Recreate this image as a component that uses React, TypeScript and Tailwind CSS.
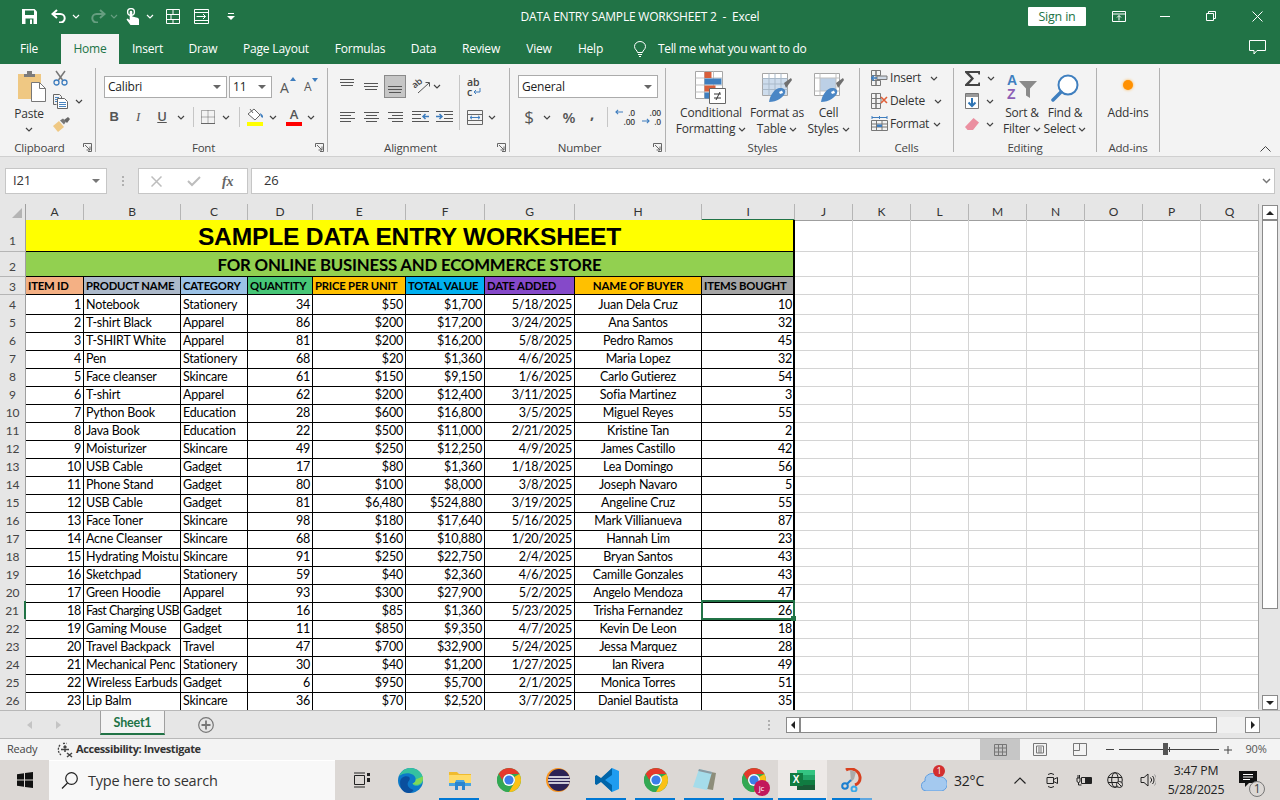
import React from "react";

const G = "#217346";
const Chev = ({ c = "#444", className = "" }: { c?: string; className?: string }) => (
  <svg width="8" height="5" viewBox="0 0 8 5" className={className}><path d="M1 1l3 3 3-3" fill="none" stroke={c} strokeWidth="1.2" /></svg>
);
const Caret = ({ c = "#666" }: { c?: string }) => (
  <svg width="8" height="4" viewBox="0 0 8 4"><path d="M0 0h8L4 4z" fill={c} /></svg>
);
const Lines = ({ rows, c = "#555", w = 17, h = 12 }: { rows: number[][]; c?: string; w?: number; h?: number }) => (
  <svg width={w} height={h} viewBox={`0 0 ${w} ${h}`}>
    {rows.map((r, i) => <path key={i} d={`M${r[0]} ${r[2]}.5H${r[1]}`} stroke={c} strokeWidth="1" />)}
  </svg>
);

const Save = () => (
  <svg width="15" height="15" viewBox="0 0 15 15"><path d="M0 0h12.5L15 2.5V15H0z" fill="#fff" /><path d="M3 1.5h9V6H3z" fill={G} /><path d="M3.5 9.5h8V15h-8z" fill={G} /><path d="M8 10.5h2V15H8z" fill="#fff" /></svg>
);
const Undo = ({ c = "#fff" }: { c?: string }) => (
  <svg width="16" height="14" viewBox="0 0 16 14"><path d="M6 1L1.5 5 6 9M2 5h7.5a4.2 4.2 0 0 1 0 8.4H8" fill="none" stroke={c} strokeWidth="2" /></svg>
);
const Touch = () => (
  <svg width="14" height="17" viewBox="0 0 14 17"><circle cx="5" cy="4" r="3.4" fill="none" stroke="#fff" strokeWidth="1.4" /><path d="M3.7 4a1.3 1.3 0 0 1 2.6 0v4.5l5 1.2c1 .3 1.7 1 1.7 2V17H4.5L.5 11.5l1-1 2.2 1.5z" fill="#fff" /></svg>
);
const FormIcon = () => (
  <svg width="14" height="15" viewBox="0 0 14 15" fill="none" stroke="#fff"><path d="M.5.5h13v14H.5zM.5 5.5h13M.5 10.5h13M7 .5v5M7 10.5v4M5 5.5v5" /></svg>
);
const SubFormIcon = () => (
  <svg width="15" height="15" viewBox="0 0 15 15" fill="none" stroke="#fff"><path d="M.5.5h14v14H.5zM.5 3.5h14M.5 11.5h14M2.5 7.5h9M9 5l2.5 2.5L9 10" /></svg>
);
const PasteIcon = () => (
  <svg width="29" height="31" viewBox="0 0 29 31"><path d="M1 3h23v25H1z" fill="#efc883" rx="2" /><path d="M7 3h11v3H7zM10 0h5v3h-5z" fill="#7c7c7c" /><path d="M14.500 11.500h8l6 6v13h-14z" fill="#fff" stroke="#777" /><path d="M22.500 11.500v6h6" fill="none" stroke="#777" /></svg>
);
const Scissors = () => (
  <svg width="15" height="16" viewBox="0 0 15 16" fill="none"><path d="M3 1l6.500 9M12 1L5.500 10" stroke="#777" strokeWidth="1.500" /><circle cx="3.500" cy="12.500" r="2.500" stroke="#3e7dbe" strokeWidth="1.300" /><circle cx="11.500" cy="12.500" r="2.500" stroke="#3e7dbe" strokeWidth="1.300" /></svg>
);
const CopyIcon = () => (
  <svg width="16" height="15" viewBox="0 0 16 15" fill="none"><path d="M.5.5h6l2 2v2M.5.5v10h3" stroke="#666" /><path d="M4.500 4.500h7l3 3v7h-10z" fill="#fff" stroke="#666" /><path d="M6 8.500h7M6 10.500h7M6 12.500h7" stroke="#4a85c0" /><path d="M2 3.500h4M2 5.500h2M2 7.500h2" stroke="#4a85c0" /></svg>
);
const Painter = () => (
  <svg width="17" height="15" viewBox="0 0 17 15"><path d="M0 9l6-5 5 6-6 5z" fill="#efc883" /><path d="M7 3.500l3-2 3 3-2 3z" fill="#777" /><path d="M11 3l4-3 2 2-3 4z" fill="#666" /></svg>
);
const BordersIcon = () => (
  <svg width="14" height="14" viewBox="0 0 14 14" fill="none" stroke="#666" strokeDasharray="1 1"><path d="M.5.5h13v13H.5zM7 .5v13M.5 7h13" /><path d="M0 13.500h14" strokeDasharray="none" /></svg>
);
const FillIcon = () => (
  <svg width="17" height="18" viewBox="0 0 17 18"><path d="M1 6l6-5 6 6-5 5z" fill="#fff" stroke="#666" /><path d="M3 1l3 4" stroke="#666" /><path d="M13 5c2 1 3.500 3 3 4.500-1 .5-2-.5-2.500-2z" fill="#3e7dbe" /><path d="M0 14h16v4H0z" fill="#ffff00" /></svg>
);
const OrientIcon = () => (
  <svg width="19" height="17" viewBox="0 0 19 17" fill="none" className="overflow-visible"><text x="1" y="9" fontSize="9" fontWeight="600" fontFamily="Open Sans" fill="#444" transform="rotate(-40 5 6)">ab</text><path d="M7 15L18 5M14.500 4.500H18.500V8.500" stroke="#555" /></svg>
);
const MergeIcon = () => (
  <svg width="16" height="15" viewBox="0 0 16 15" fill="none"><path d="M.5.5h15v14H.5zM.5 4.500h15M.5 10.500h15" stroke="#666" /><path d="M3 7.500h10M5 5.800L3 7.500l2 1.700M11 5.800l2 1.700-2 1.700" stroke="#3e7dbe" /></svg>
);
const WrapIcon = () => (
  <div className="relative w-[17px] h-[20px] text-[10.5px] leading-[10px] text-[#444] font-semibold">
    <div>ab</div>
    <div className="flex items-center h-[10px]">c<svg width="8" height="7" viewBox="0 0 8 7" fill="none" className="ml-[1px]"><path d="M7 0v4H1M3 2L1 4l2 2" stroke="#3e7dbe" /></svg></div>
  </div>
);
const IndentIcon = ({ flip }: { flip?: boolean }) => (
  <svg width="17" height="12" viewBox="0 0 17 12" className={flip ? "-scale-x-100" : ""} fill="none"><path d="M0 .500h17M8 3.500h9M8 7.500h9M0 10.500h17" stroke="#555" /><path d="M0 5.500h5M3.500 3l2.500 2.500L3.500 8" stroke="#3e7dbe" strokeWidth="1.500" /></svg>
);
const DecIcon = ({ inc }: { inc?: boolean }) => (
  <div className="relative w-[20px] h-[18px] flex flex-col text-[8.5px] leading-[9px] font-semibold text-[#444] items-end">
    <div>{inc ? ".0" : ".00"}</div>
    <div>{inc ? ".00" : ".0"}</div>
    <svg width="8" height="6" viewBox="0 0 9 6" fill="none" className={inc ? "absolute left-0 top-[1px]" : "absolute left-[1px] top-[10px] -scale-x-100"}><path d="M1 3h8M3.500 .5L1 3l2.500 2.500" stroke="#3e7dbe" strokeWidth="1.200" /></svg>
  </div>
);
const CondIcon = () => (
  <svg width="32" height="34" viewBox="0 0 32 34" fill="none">
    <path d="M.5 .5h27v27H.5z" fill="#fff" stroke="#a6a6a6" />
    <path d="M.5 7h27M.5 14h27M.5 21h27M9.500 .5v27M18.500 .5v27" stroke="#bfbfbf" />
    <path d="M9.500 1h7v6h-7z" fill="#d95f3b" /><path d="M9.500 7.500h17v6h-17z" fill="#3f7fbf" /><path d="M9.500 14.500h11v6h-11z" fill="#d95f3b" /><path d="M9.500 21.500h5v6h-5z" fill="#3f7fbf" />
    <path d="M14.500 17.500h16v15h-16z" fill="#fff" stroke="#666" />
    <path d="M19 23h7M19 27h7M25 21l-4 8" stroke="#333" />
  </svg>
);
const TableBrush = ({ one }: { one?: boolean }) => (
  <svg width="30" height="30" viewBox="0 0 30 30" fill="none">
    <path d="M.5 .5h25v22H.5z" fill="#fff" stroke="#a6a6a6" />
    {one ? <path d="M6 5h16v13H6z" fill="#bcd0e6" /> : <path d="M1 5h24v17H1z" fill="#cddcec" />}
    {!one && <path d="M.5 5.500h25M.5 11h25M.5 16.500h25M7 .5v22M13 .5v22M19 .5v22" stroke="#a9b9c9" />}
    {one && <path d="M.5 5h25M.5 18h25M6 .5v22M22 .5v22" stroke="#bfbfbf" />}
    <path d="M22 10l7-5 1 2-6 8z" fill="#6f6f6f" />
    <path d="M7 29c1-7 6-14 11-14 4 0 6 2 5 5-1 4-8 9-16 9z" fill="#4a86c5" />
    <path d="M17 19l3-1.500 1 2.500-3 1z" fill="#fff" />
  </svg>
);
const CellIco = ({ kind }: { kind: string }) => (
  <svg width="17" height="17" viewBox="0 0 17 17" fill="none">
    <path d="M.5 .5h4.500v5H.5zM5 .5h4.500v5H5zM.5 10.500h4.500v5H.5zM5 10.500h4.500v5H5zM.5 5.500h4.500v5H.5z" stroke="#777" />
    {kind === "i" && <><path d="M6 6h10v3.500H6z" fill="#cfd8e3" stroke="#777" /><path d="M6 8H1M3 5.500L.5 8 3 10.500" stroke="#3e7dbe" strokeWidth="1.500" /></>}
    {kind === "d" && <><path d="M5 5.500h5v5H5z" stroke="#777" /><path d="M10 4l6 6M16 4l-6 6" stroke="#e0603a" strokeWidth="1.600" /></>}
  </svg>
);
const FormatIco = () => (
  <svg width="17" height="17" viewBox="0 0 17 17" fill="none">
    <path d="M1 1.500h15M1 0v3M16 0v3M8.500 0v3" stroke="#3e7dbe" />
    <path d="M.5 4.500h16v10H.5zM.5 8h16M.5 11h16M5.500 4.500v10M11 4.500v10" stroke="#777" />
    <path d="M6 8.500h5v2.500H6z" fill="#3e7dbe" />
  </svg>
);
const Sigma = () => (
  <svg width="15" height="15" viewBox="0 0 15 15"><path d="M0 0h15v3.500h-1.500L13 2H4l5 5.500L4 13h9l.5-1.500H15V15H0v-1.500L6 7.500 0 1.500z" fill="#444" /></svg>
);
const FillDown = () => (
  <svg width="14" height="16" viewBox="0 0 14 16" fill="none"><path d="M.5 .5h13v15H.5z" fill="#fff" stroke="#777" /><path d="M1 1h12v3H1z" fill="#999" /><path d="M7 5v8M3.500 9.500L7 13l3.500-3.500" stroke="#2f75b5" strokeWidth="2" /></svg>
);
const Eraser = () => (
  <svg width="14" height="13" viewBox="0 0 14 13"><path d="M8.500 0L14 4.500 8 12 2.500 12 0 9z" fill="#eb8fa0" /></svg>
);
const SortIco = () => (
  <div className="relative w-[30px] h-[28px] font-['Liberation_Sans',sans-serif] font-bold text-[14px] leading-[13px]">
    <div className="text-[#3f7fbf]">A</div>
    <div className="text-[#8d5fb5] mt-[1px]">Z</div>
    <svg width="18" height="17" viewBox="0 0 18 17" className="absolute left-[12px] top-[7px]"><path d="M0 0h18l-7 7.500V17l-4-2.500v-7z" fill="#8a8a8a" /></svg>
  </div>
);
const FindIco = () => (
  <svg width="28" height="28" viewBox="0 0 28 28" fill="none"><circle cx="17" cy="11" r="9.500" fill="#fff" stroke="#3f7fbf" strokeWidth="2" /><path d="M10 18L2 26" stroke="#3f7fbf" strokeWidth="3.500" strokeLinecap="round" /></svg>
);

const Group = ({ w, label, launcher, children }: { w: string; label: string; launcher?: boolean; children: React.ReactNode }) => (
  <div className={`${w} relative shrink-0 h-[84px] flex flex-col border-r border-[#b1b1b1]`}>
    <div className="h-[75px] flex">{children}</div>
    <div className={launcher ? "h-[9px] pr-[16px] text-[11.5px] leading-[9px] text-center text-[#444]" : "h-[9px] text-[11.5px] leading-[9px] text-center text-[#444]"}>{label}</div>
    {launcher && (
      <svg width="9" height="9" viewBox="0 0 9 9" className="absolute right-[3px] bottom-[0px]" fill="none"><path d="M.5 4V.5H8.500V8.500H5" stroke="#666" /><path d="M2 2l5 5M3.500 7H7V3.500" stroke="#666" /></svg>
    )}
  </div>
);

const BigBtn = ({ w, icon, l1, l2 }: { w: string; icon: React.ReactNode; l1: string; l2: string }) => (
  <div className={`${w} flex flex-col items-center pt-[3px] text-[12px] leading-[16px] text-[#333] shrink-0`}>
    <div className="h-[33px] flex items-center justify-center">{icon}</div>
    <div className="mt-[1px] whitespace-nowrap">{l1}</div>
    <div className="whitespace-nowrap flex items-center gap-[3px]">{l2}<Chev /></div>
  </div>
);

const Ribbon = () => (
  <div className="h-[93px] bg-[#f3f3f3] border-b border-[#d0d0d0] flex pt-[4px] shrink-0">
    <Group w="w-[96px]" label="Clipboard" launcher>
      <div className="w-[53px] pl-[14px] flex flex-col items-start shrink-0">
        <div className="pt-[3px] h-[35px] pl-[3px]"><PasteIcon /></div>
        <div className="text-[12px] leading-[16px] text-[#333] mt-[3px] w-[30px] text-center">Paste</div>
        <div className="w-[30px] flex justify-center mt-[5px]"><Chev /></div>
      </div>
      <div className="flex flex-col gap-[3px]">
        <div className="h-[20px] flex items-center"><Scissors /></div>
        <div className="h-[20px] flex items-center gap-[6px]"><CopyIcon /><Chev /></div>
        <div className="h-[20px] flex items-center"><Painter /></div>
      </div>
    </Group>

    <Group w="w-[232px]" label="Font" launcher>
      <div className="pl-[8px] pt-[8px] w-full">
        <div className="flex items-center h-[22px]">
          <div className="w-[123px] h-[22px] bg-white border border-[#ababab] flex items-center justify-between pl-[3px] pr-[5px] text-[12px] text-[#222]">Calibri<Caret /></div>
          <div className="w-[43px] h-[22px] ml-[2px] bg-white border border-[#ababab] flex items-center justify-between pl-[3px] pr-[5px] text-[12px] text-[#222]">11<Caret /></div>
          <div className="relative w-[24px] ml-[8px] text-[14px] text-[#555]">A<svg width="6" height="4" viewBox="0 0 6 4" className="absolute left-[10px] top-[0px]"><path d="M3 0l3 4H0z" fill="#3e7dbe" /></svg></div>
          <div className="relative w-[20px] text-[12px] text-[#555] ml-[0px]">A<svg width="6" height="4" viewBox="0 0 6 4" className="absolute left-[8px] top-[0px]"><path d="M0 0h6L3 4z" fill="#3e7dbe" /></svg></div>
        </div>
        <div className="flex items-center h-[20px] mt-[9px] text-[#555]">
          <div className="w-[20px] text-center font-bold text-[13px] font-['Liberation_Sans',sans-serif]">B</div>
          <div className="w-[24px] ml-[2px] text-center italic text-[13px] font-['Liberation_Serif',serif]">I</div>
          <div className="w-[24px] text-center font-semibold text-[13px] underline">U</div>
          <div className="ml-[3px]"><Chev /></div>
          <div className="w-px h-[20px] bg-[#c6c6c6] ml-[8px] mr-[7px]" />
          <BordersIcon />
          <div className="ml-[7px]"><Chev /></div>
          <div className="w-px h-[20px] bg-[#c6c6c6] ml-[9px] mr-[7px]" />
          <FillIcon />
          <div className="ml-[5px]"><Chev /></div>
          <div className="w-[16px] ml-[9px] text-center relative">
            <div className="text-[13px] leading-[13px] font-semibold text-[#555]">A</div>
            <div className="h-[4px] bg-[#ff0000] mt-[1px]" />
          </div>
          <div className="ml-[5px]"><Chev /></div>
        </div>
      </div>
    </Group>

    <Group w="w-[182px]" label="Alignment" launcher>
      <div className="pl-[11px] pt-[7px]">
        <div className="flex items-center h-[23px]">
          <div className="w-[17px] self-start pt-[3px]"><Lines rows={[[1, 15, 1], [1, 15, 4], [2, 14, 7]]} h={9} /></div>
          <div className="w-[17px] ml-[7px]"><Lines rows={[[1, 15, 1], [1, 15, 4], [2, 14, 7]]} h={9} /></div>
          <div className="w-[22px] h-[23px] ml-[4px] bg-[#c6c6c6] border border-[#8a8a8a] flex items-end justify-center pb-[3px]"><Lines rows={[[1, 15, 1], [1, 15, 4], [2, 14, 7]]} h={9} /></div>
          <div className="ml-[5px]"><OrientIcon /></div>
          <div className="ml-[3px]"><Chev /></div>
          <div className="w-px h-[55px] bg-[#c6c6c6] ml-[18px] mr-[7px] self-start" />
          <WrapIcon />
        </div>
        <div className="flex items-center h-[20px] mt-[9px]">
          <div className="ml-[1px]"><Lines rows={[[0, 15, 1], [0, 11, 4], [0, 15, 7], [0, 11, 10]]} /></div>
          <div className="ml-[7px]"><Lines rows={[[0, 15, 1], [2, 13, 4], [0, 15, 7], [2, 13, 10]]} /></div>
          <div className="ml-[7px]"><Lines rows={[[0, 15, 1], [4, 15, 4], [0, 15, 7], [4, 15, 10]]} /></div>
          <div className="ml-[7px]"><IndentIcon flip /></div>
          <div className="ml-[7px]"><IndentIcon /></div>
          <div className="ml-[14px]"><MergeIcon /></div>
          <div className="ml-[5px]"><Chev /></div>
        </div>
      </div>
    </Group>

    <Group w="w-[156px]" label="Number" launcher>
      <div className="pl-[8px] pt-[7px]">
        <div className="w-[140px] h-[23px] bg-white border border-[#ababab] flex items-center justify-between pl-[3px] pr-[5px] text-[12px] text-[#222]">General<Caret /></div>
        <div className="flex items-center h-[20px] mt-[9px] text-[#555]">
          <div className="w-[22px] text-center text-[17px]">$</div>
          <div className="ml-[3px]"><Chev /></div>
          <div className="w-[22px] ml-[7px] text-center text-[15px] font-semibold">%</div>
          <div className="w-[10px] ml-[7px] text-center text-[15px] font-bold -translate-y-[4px]">,</div>
          <div className="w-px h-[20px] bg-[#c6c6c6] ml-[10px] mr-[7px]" />
          <DecIcon inc />
          <div className="ml-[6px]"><DecIcon /></div>
        </div>
      </div>
    </Group>

    <Group w="w-[194px]" label="Styles">
      <BigBtn w="w-[90px]" icon={<CondIcon />} l1="Conditional" l2="Formatting" />
      <BigBtn w="w-[42px]" icon={<TableBrush />} l1="Format as" l2="Table" />
      <BigBtn w="w-[61px]" icon={<TableBrush one />} l1="Cell" l2="Styles" />
    </Group>

    <Group w="w-[94px]" label="Cells">
      <div className="pl-[11px] flex flex-col gap-[3px] text-[12px] text-[#333]">
        <div className="h-[20px] flex items-center gap-[2px]"><CellIco kind="i" />Insert<div className="ml-[7px]"><Chev /></div></div>
        <div className="h-[20px] flex items-center gap-[2px]"><CellIco kind="d" />Delete<div className="ml-[7px]"><Chev /></div></div>
        <div className="h-[20px] flex items-center gap-[2px]"><FormatIco />Format<div className="ml-[2px]"><Chev /></div></div>
      </div>
    </Group>

    <Group w="w-[143px]" label="Editing">
      <div className="pl-[11px] flex flex-col gap-[3px] w-[46px] shrink-0">
        <div className="h-[20px] flex items-center gap-[7px]"><Sigma /><Chev /></div>
        <div className="h-[20px] flex items-center gap-[7px]"><FillDown /><Chev /></div>
        <div className="h-[20px] flex items-center gap-[7px]"><Eraser /><Chev /></div>
      </div>
      <BigBtn w="w-[44px]" icon={<SortIco />} l1="Sort &" l2="Filter" />
      <BigBtn w="w-[42px]" icon={<FindIco />} l1="Find &" l2="Select" />
    </Group>

    <Group w="w-[63px]" label="Add-ins">
      <div className="w-full flex flex-col items-center pt-[3px] text-[12px] leading-[16px] text-[#333]">
        <div className="h-[33px] flex items-center justify-center -translate-y-[3px]">
          <div className="w-[10px] h-[10px] rounded-full bg-[#ff9000] shadow-[0_0_3px_#ffb040]" />
        </div>
        <div className="mt-[1px]">Add-ins</div>
      </div>
    </Group>
    <div className="flex-1 flex justify-end items-end pr-[9px] pb-[4px]">
      <svg width="11" height="6" viewBox="0 0 11 6" fill="none"><path d="M.5 5.500l5-5 5 5" stroke="#444" /></svg>
    </div>
  </div>
);

const TitleBar = () => (
  <div className="h-[32px] bg-[#217346] flex items-center text-white shrink-0">
    <div className="w-[400px] flex items-center pl-[22px] shrink-0">
      <Save />
      <div className="ml-[14px]"><Undo /></div>
      <div className="ml-[5px]"><Chev c="#fff" /></div>
      <div className="ml-[10px] -scale-x-100"><Undo c="#669e80" /></div>
      <div className="ml-[4px]"><Chev c="#669e80" /></div>
      <div className="ml-[8px]"><Touch /></div>
      <div className="ml-[6px]"><Chev c="#fff" /></div>
      <div className="ml-[12px]"><FormIcon /></div>
      <div className="ml-[14px]"><SubFormIcon /></div>
      <div className="ml-[18px] flex flex-col items-center gap-[2px]"><div className="w-[6px] h-px bg-white" /><Caret c="#fff" /></div>
    </div>
    <div className="flex-1 text-center text-[12px] whitespace-pre pt-[2px]">DATA ENTRY SAMPLE WORKSHEET 2  -  Excel</div>
    <div className="w-[400px] flex items-center justify-end shrink-0">
      <div className="w-[58px] h-[19px] bg-white rounded-[1px] text-[#217346] text-[12.5px] leading-[19px] text-center mr-[10px]">Sign in</div>
      <div className="w-[46px] flex justify-center">
        <svg width="14" height="11" viewBox="0 0 14 11" fill="none" stroke="#fff"><path d="M.5 .5h13v10H.5zM.5 3h13M7 9.500V4.500M5 6.500l2-2 2 2" /></svg>
      </div>
      <div className="w-[46px] flex justify-center"><div className="w-[10px] h-px bg-white" /></div>
      <div className="w-[46px] flex justify-center">
        <svg width="10" height="10" viewBox="0 0 10 10" fill="none" stroke="#fff"><path d="M.5 2.500h7v7h-7zM2.500 2.500V.5h7v7h-2" /></svg>
      </div>
      <div className="w-[46px] flex justify-center">
        <svg width="11" height="11" viewBox="0 0 11 11" fill="none" stroke="#fff"><path d="M.5 .5l10 10M10.500 .5l-10 10" /></svg>
      </div>
    </div>
  </div>
);

const TabBar = () => (
  <div className="h-[32px] bg-[#217346] flex items-end text-white text-[12px] shrink-0">
    <div className="w-[61px] h-[30px] leading-[30px] text-center pr-[3px]">File</div>
    <div className="w-[58px] h-[30px] leading-[30px] text-center bg-[#f3f3f3] text-[#217346]">Home</div>
    {[["Insert", "w-[57px]"], ["Draw", "w-[54px]"], ["Page Layout", "w-[92px]"], ["Formulas", "w-[76px]"], ["Data", "w-[51px]"], ["Review", "w-[64px]"], ["View", "w-[52px]"], ["Help", "w-[51px]"]].map(([t, w]) => (
      <div key={t} className={`${w} h-[30px] leading-[30px] text-center whitespace-nowrap`}>{t}</div>
    ))}
    <div className="h-[30px] flex items-center ml-[18px] gap-[12px] tracking-[-0.35px]">
      <svg width="12" height="16" viewBox="0 0 12 16" fill="none" stroke="#fff"><path d="M3.500 11.500c0-2-3-3-3-6a5.500 5 0 0 1 11 0c0 3-3 4-3 6zM4 13.500h4M5 15.500h2" /></svg>
      Tell me what you want to do
    </div>
    <div className="flex-1 h-[30px] flex items-center justify-end pr-[14px] pb-[4px]">
      <svg width="17" height="15" viewBox="0 0 17 15" fill="none" stroke="#fff"><path d="M.5 .5h16v10H8l-3 3.500v-3.500H.5z" /></svg>
    </div>
  </div>
);

const FormulaBar = () => (
  <div className="h-[47px] bg-[#e6e6e6] flex items-center pl-[5px] pr-[5px] pt-[1px] shrink-0 text-[13px] text-[#333]">
    <div className="w-[102px] h-[26px] bg-white border border-[#c6c6c6] flex items-center justify-between pl-[7px] pr-[6px]">I21<Caret c="#777" /></div>
    <div className="w-[31px] flex flex-col items-center gap-[2px]">{[0, 1, 2].map((i) => <div key={i} className="w-[2px] h-[2px] bg-[#b0b0b0]" />)}</div>
    <div className="w-[110px] h-[26px] bg-white border border-[#c6c6c6] flex items-center pl-[12px]">
      <svg width="11" height="11" viewBox="0 0 11 11" fill="none" stroke="#bdbdbd" strokeWidth="1.500"><path d="M.5 .5l10 10M10.500 .5l-10 10" /></svg>
      <svg width="14" height="11" viewBox="0 0 14 11" fill="none" stroke="#bdbdbd" strokeWidth="2" className="ml-[25px]"><path d="M1 5l4 4 8-8" /></svg>
      <span className="ml-[21px] italic font-['Liberation_Serif',serif] font-bold text-[#666] text-[14px]">fx</span>
    </div>
    <div className="flex-1 h-[26px] ml-[3px] bg-white border border-[#c6c6c6] flex items-center justify-between pl-[12px] pr-[3px]">
      26
      <svg width="9" height="6" viewBox="0 0 9 6" fill="none"><path d="M1 1l3.500 3.500L8 1" stroke="#777" strokeWidth="1.500" /></svg>
    </div>
  </div>
);

const GRID = "grid grid-cols-[26px_58px_97px_67px_65px_93px_79px_90px_127px_93px_58px_58px_58px_58px_58px_58px_58px_58px]";
const LETTERS = ["A", "B", "C", "D", "E", "F", "G", "H", "I", "J", "K", "L", "M", "N", "O", "P", "Q"];

const HeaderCell = ({ t, fill }: { t: string; fill: string }) => (
  <div className={`${fill} border-r border-b border-black px-[2px] whitespace-nowrap overflow-hidden leading-[18px] font-bold text-[11.3px] text-black`}>{t}</div>
);

const Empty = ({ last }: { last?: boolean }) => (
  <div className={last ? "border-r border-b border-[#a6a6a6] border-b-[#d4d4d4]" : "border-r border-b border-[#d4d4d4]"} />
);
const EmptyRun = () => <>{[0, 1, 2, 3, 4, 5, 6, 7].map((i) => <Empty key={i} last={i === 7} />)}</>;

const RowHead = ({ n, active }: { n: number; active?: boolean }) => (
  <div className={active ? "bg-[#e6e6e6] border-r-2 border-r-[#217346] border-b border-b-[#b5b5b5] text-center text-[12px] text-[#444] leading-[19px] overflow-hidden" : "bg-[#e6e6e6] border-r border-r-[#9f9f9f] border-b border-b-[#b5b5b5] text-center text-[12px] text-[#444] leading-[19px] overflow-hidden"}>{n}</div>
);

const DATA: string[][] = [
  ["1", "Notebook", "Stationery", "34", "$50", "$1,700", "5/18/2025", "Juan Dela Cruz", "10"],
  ["2", "T-shirt Black", "Apparel", "86", "$200", "$17,200", "3/24/2025", "Ana Santos", "32"],
  ["3", "T-SHIRT White", "Apparel", "81", "$200", "$16,200", "5/8/2025", "Pedro Ramos", "45"],
  ["4", "Pen", "Stationery", "68", "$20", "$1,360", "4/6/2025", "Maria Lopez", "32"],
  ["5", "Face cleanser", "Skincare", "61", "$150", "$9,150", "1/6/2025", "Carlo Gutierez", "54"],
  ["6", "T-shirt", "Apparel", "62", "$200", "$12,400", "3/11/2025", "Sofia Martinez", "3"],
  ["7", "Python Book", "Education", "28", "$600", "$16,800", "3/5/2025", "Miguel Reyes", "55"],
  ["8", "Java Book", "Education", "22", "$500", "$11,000", "2/21/2025", "Kristine Tan", "2"],
  ["9", "Moisturizer", "Skincare", "49", "$250", "$12,250", "4/9/2025", "James Castillo", "42"],
  ["10", "USB Cable", "Gadget", "17", "$80", "$1,360", "1/18/2025", "Lea Domingo", "56"],
  ["11", "Phone Stand", "Gadget", "80", "$100", "$8,000", "3/8/2025", "Joseph Navaro", "5"],
  ["12", "USB Cable", "Gadget", "81", "$6,480", "$524,880", "3/19/2025", "Angeline Cruz", "55"],
  ["13", "Face Toner", "Skincare", "98", "$180", "$17,640", "5/16/2025", "Mark Villianueva", "87"],
  ["14", "Acne Cleanser", "Skincare", "68", "$160", "$10,880", "1/20/2025", "Hannah Lim", "23"],
  ["15", "Hydrating Moistu", "Skincare", "91", "$250", "$22,750", "2/4/2025", "Bryan Santos", "43"],
  ["16", "Sketchpad", "Stationery", "59", "$40", "$2,360", "4/6/2025", "Camille Gonzales", "43"],
  ["17", "Green Hoodie", "Apparel", "93", "$300", "$27,900", "5/2/2025", "Angelo Mendoza", "47"],
  ["18", "Fast Charging USB", "Gadget", "16", "$85", "$1,360", "5/23/2025", "Trisha Fernandez", "26"],
  ["19", "Gaming Mouse", "Gadget", "11", "$850", "$9,350", "4/7/2025", "Kevin De Leon", "18"],
  ["20", "Travel Backpack", "Travel", "47", "$700", "$32,900", "5/24/2025", "Jessa Marquez", "28"],
  ["21", "Mechanical Penc", "Stationery", "30", "$40", "$1,200", "1/27/2025", "Ian Rivera", "49"],
  ["22", "Wireless Earbuds", "Gadget", "6", "$950", "$5,700", "2/1/2025", "Monica Torres", "51"],
  ["23", "Lip Balm", "Skincare", "36", "$70", "$2,520", "3/7/2025", "Daniel Bautista", "35"],
];

const CELL = "border-r border-b border-black px-[2px] whitespace-nowrap overflow-hidden text-[12.5px] leading-[19px] text-black";

const Sheet = () => (
  <div className="flex h-[506px] shrink-0 bg-white overflow-hidden">
    <div className="w-[1259px] font-['Lato',sans-serif]">
      <div className={`${GRID} h-[16px] bg-[#e6e6e6]`}>
        <div className="border-r border-b border-[#9f9f9f] flex items-end justify-end pr-[3px] pb-[2px]">
          <svg width="10" height="10" viewBox="0 0 10 10"><path d="M10 0v10H0z" fill="#b4b4b4" /></svg>
        </div>
        {LETTERS.map((l) => (
          <div key={l} className={l === "I" ? "border-r border-[#b5b5b5] border-b-2 border-b-[#217346] text-center text-[12px] leading-[15px] text-[#333]" : "border-r border-[#b5b5b5] border-b border-b-[#9f9f9f] text-center text-[12px] leading-[15px] text-[#333]"}>{l}</div>
        ))}
      </div>
      <div className={`${GRID} h-[32px]`}>
        <div className="bg-[#e6e6e6] border-r border-r-[#9f9f9f] border-b border-b-[#b5b5b5] text-center text-[12px] text-[#444] pt-[12px] leading-[17px]">1</div>
        <div className="col-span-9 bg-[#ffff00] border-r-2 border-b border-black text-center font-['Liberation_Sans',sans-serif] font-bold text-[24.6px] leading-[33px] text-black overflow-hidden">SAMPLE DATA ENTRY WORKSHEET</div>
        <EmptyRun />
      </div>
      <div className={`${GRID} h-[25px]`}>
        <div className="bg-[#e6e6e6] border-r border-r-[#9f9f9f] border-b border-b-[#b5b5b5] text-center text-[12px] text-[#444] pt-[6px] leading-[17px]">2</div>
        <div className="col-span-9 bg-[#92d050] border-r-2 border-b border-black text-center font-bold text-[16.8px] leading-[26px] text-black overflow-hidden">FOR ONLINE BUSINESS AND ECOMMERCE STORE</div>
        <EmptyRun />
      </div>
      <div className={`${GRID} h-[18px]`}>
        <RowHead n={3} />
        <HeaderCell t="ITEM ID" fill="bg-[#f4b084]" />
        <HeaderCell t="PRODUCT NAME" fill="bg-[#acb9ca]" />
        <HeaderCell t="CATEGORY" fill="bg-[#9bc2e6]" />
        <HeaderCell t="QUANTITY" fill="bg-[#47c677]" />
        <HeaderCell t="PRICE PER UNIT" fill="bg-[#ffc000]" />
        <HeaderCell t="TOTAL VALUE" fill="bg-[#00b0f0]" />
        <HeaderCell t="DATE ADDED" fill="bg-[#8549c9]" />
        <div className="bg-[#ffc000] border-r border-b border-black text-center leading-[18px] font-bold text-[11.5px] text-black overflow-hidden">NAME OF BUYER</div>
        <div className="bg-[#a5a5a5] border-r-2 border-b border-black px-[2px] whitespace-nowrap overflow-hidden leading-[18px] font-bold text-[11.3px] text-black">ITEMS BOUGHT</div>
        <EmptyRun />
      </div>
      {DATA.map((r, i) => {
        const active = r[0] === "18";
        return (
          <div key={r[0]} className={`${GRID} h-[18px]`}>
            <RowHead n={i + 4} active={active} />
            <div className={`${CELL} text-right`}>{r[0]}</div>
            <div className={r[1].length > 16 ? `${CELL} tracking-[-0.5px]` : CELL}>{r[1]}</div>
            <div className={CELL}>{r[2]}</div>
            <div className={`${CELL} text-right`}>{r[3]}</div>
            <div className={`${CELL} text-right`}>{r[4]}</div>
            <div className={`${CELL} text-right`}>{r[5]}</div>
            <div className={`${CELL} text-right`}>{r[6]}</div>
            <div className={`${CELL} text-center`}>{r[7]}</div>
            <div className="relative border-r-2 border-b border-black pl-[2px] pr-px whitespace-nowrap text-[12.5px] leading-[19px] text-black text-right">
              {r[8]}
              {active && (
                <div className="absolute left-[-1px] top-[-1px] w-[94px] h-[20px] border-2 border-[#217346] z-10">
                  <div className="absolute right-[-3px] bottom-[-3px] w-[5px] h-[5px] bg-[#217346]" />
                </div>
              )}
            </div>
            <EmptyRun />
          </div>
        );
      })}
      <div className={`${GRID} h-[1px]`}>
        <div className="bg-[#e6e6e6] border-r border-[#9f9f9f]" />
        {[0, 1, 2, 3, 4, 5, 6, 7, 8].map((i) => <div key={i} className={i === 8 ? "border-r-2 border-black" : "border-r border-black"} />)}
        {[0, 1, 2, 3, 4, 5, 6, 7].map((i) => <div key={i} className="border-r border-[#d4d4d4]" />)}
      </div>
    </div>
    <div className="flex-1 bg-[#e6e6e6] flex flex-col items-center pt-[1px] pl-[1px]">
      <div className="w-[16px] h-[15px] bg-white border border-[#8a8a8a] flex items-center justify-center"><svg width="8" height="4" viewBox="0 0 8 4"><path d="M4 0l4 4H0z" fill="#222" /></svg></div>
      <div className="w-[16px] h-[389px] bg-white border border-[#8a8a8a]" />
      <div className="flex-1" />
      <div className="w-[16px] h-[15px] bg-white border border-[#8a8a8a] flex items-center justify-center"><svg width="8" height="4" viewBox="0 0 8 4"><path d="M0 0h8L4 4z" fill="#222" /></svg></div>
    </div>
  </div>
);

const SheetTabs = () => (
  <div className="h-[29px] bg-[#e6e6e6] border-y border-[#b8b8b8] flex items-start shrink-0">
    <div className="w-[100px] h-[27px] flex items-center pl-[27px] gap-[24px]">
      <svg width="5" height="8" viewBox="0 0 5 8"><path d="M5 0v8L0 4z" fill="#c4c4c4" /></svg>
      <svg width="5" height="8" viewBox="0 0 5 8"><path d="M0 0v8l5-4z" fill="#c4c4c4" /></svg>
    </div>
    <div className="w-[65px] h-[24px] bg-[#f3f3f3] border-x border-[#9f9f9f] border-b-2 border-b-[#217346] text-center text-[#217346] font-bold text-[12.5px] leading-[24px] font-['Lato',sans-serif]">Sheet1</div>
    <div className="w-[82px] h-[27px] flex items-center justify-center">
      <svg width="16" height="16" viewBox="0 0 16 16" fill="none" stroke="#777"><circle cx="8" cy="8" r="7.300" strokeWidth="1.200" /><path d="M8 3.500v9M3.500 8h9" strokeWidth="1.800" /></svg>
    </div>
    <div className="w-[539px] h-[27px] flex items-center justify-end pr-[16px]">
      <div className="flex flex-col gap-[2px]">{[0, 1, 2].map((i) => <div key={i} className="w-[2px] h-[2px] bg-[#b0b0b0]" />)}</div>
    </div>
    <div className="w-[14px] h-[16px] mt-[6px] bg-white border border-[#8a8a8a] flex items-center justify-center"><svg width="4" height="8" viewBox="0 0 4 8"><path d="M4 0v8L0 4z" fill="#222" /></svg></div>
    <div className="w-[417px] h-[16px] mt-[6px] bg-white border border-[#8a8a8a]" />
    <div className="w-[28px] h-[16px] mt-[6px] bg-[#f0f0f0]" />
    <div className="w-[15px] h-[16px] mt-[6px] bg-white border border-[#8a8a8a] flex items-center justify-center"><svg width="4" height="8" viewBox="0 0 4 8"><path d="M0 0v8l4-4z" fill="#222" /></svg></div>
  </div>
);

const StatusBar = () => (
  <div className="h-[21px] bg-[#f3f3f3] flex items-center text-[11px] text-[#444] shrink-0">
    <div className="pl-[7px] w-[57px]">Ready</div>
    <svg width="17" height="16" viewBox="0 0 17 16" fill="none" stroke="#444"><path d="M3 3a7 7 0 0 0 1 10M6 1.500a7 7 0 0 1 3.500 0" strokeDasharray="2 1" strokeWidth="1.300" /><circle cx="8" cy="5" r="1.200" fill="#444" /><path d="M4 7.500h8M8 7v3M10 11l5 4M15 11l-5 4" strokeWidth="1.500" /></svg>
    <div className="ml-[2px] font-bold text-[#333] tracking-[-0.4px]">Accessibility: Investigate</div>
    <div className="flex-1" />
    <div className="w-[40px] h-[21px] bg-[#c6c6c6] flex items-center justify-center">
      <svg width="13" height="12" viewBox="0 0 13 12" fill="none" stroke="#777"><path d="M.5 .5h12v11H.5zM.5 4h12M.5 8h12M4.500 .5v11M8.500 .5v11" /></svg>
    </div>
    <div className="w-[40px] flex justify-center"><svg width="14" height="13" viewBox="0 0 14 13" fill="none" stroke="#777"><path d="M.5 .5h13v12H.5zM3.500 3h7v7h-7zM5 5h4M5 7h4M5 9h4" /></svg></div>
    <div className="w-[40px] flex justify-center"><svg width="14" height="13" viewBox="0 0 14 13" fill="none" stroke="#777"><path d="M.5 .5h13v12H.5zM.5 7.500h6V.5" /></svg></div>
    <div className="w-[19px] flex justify-center"><div className="w-[8px] h-px bg-[#444]" /></div>
    <div className="relative w-[100px] h-px bg-[#444]">
      <div className="absolute left-[44px] top-[-6px] w-[5px] h-[12px] bg-[#555]" />
      <div className="absolute left-[50px] top-[-2px] w-px h-[5px] bg-[#444]" />
    </div>
    <div className="w-[18px] flex justify-center"><svg width="8" height="8" viewBox="0 0 8 8" stroke="#444"><path d="M4 0v8M0 4h8" /></svg></div>
    <div className="w-[43px] text-center pr-[5px] text-[#555]">90%</div>
  </div>
);

const Chrome = ({ badge }: { badge?: boolean }) => (
  <div className="relative w-[24px] h-[24px]">
    <svg width="24" height="24" viewBox="0 0 24 24">
      <circle cx="12" cy="12" r="12" fill="#33a853" />
      <path d="M22.390 6A12 12 0 0 1 12 24l5.200-9a6 6 0 0 0 0-6z" fill="#fbc116" />
      <path d="M1.610 6A12 12 0 0 1 22.390 6H12a6 6 0 0 0-5.200 3L1.610 18 6.800 15z" fill="#e5392b" />
      <path d="M1.610 6L6.800 15A6 6 0 0 0 12 18l-0 6A12 12 0 0 1 1.610 6z" fill="#33a853" />
      <circle cx="12" cy="12" r="6" fill="#fff" />
      <circle cx="12" cy="12" r="4.600" fill="#3b7de8" />
    </svg>
    {badge && <div className="absolute right-[-4px] bottom-[-4px] w-[16px] h-[16px] rounded-full bg-[#c2185b] text-white text-[8px] leading-[16px] text-center">jc</div>}
  </div>
);
const Edge = () => (
  <svg width="25" height="25" viewBox="0 0 24 24">
    <circle cx="12" cy="12" r="12" fill="#0c79c8" />
    <path d="M1 8C3 2 8 0 12 0c7 0 12 5 12 11 0 4-3 6-6 6-2 0-4-1-4-2 2-1 3-2 3-4 0-4-4-6-8-6-3 0-6 1-8 3z" fill="#35c1a0" />
    <path d="M24 10c0 3-2 5-5 6-3 0-5-1-5-1 2-1 3-2 3-4l7-3z" fill="#7fd857" />
    <path d="M2 14c0-4 3-6 6-6 4 0 4 3 2 5-2 3 0 7 5 8-1 2-3 3-5 3-5 0-8-4-8-10z" fill="#0a4f9e" />
  </svg>
);
const Folder = () => (
  <svg width="22" height="20" viewBox="0 0 22 20"><path d="M0 2h8l2 2h12v4H0z" fill="#f0bb2e" /><path d="M0 5h22v11H0z" fill="#ffdb68" /><path d="M0 13h6l1-3h8l1 3h6v3H0z" fill="#4aa5e0" /><path d="M6 12h10v8h-3v-4H9v4H6z" fill="#2a86cf" /></svg>
);
const Eclipse = () => (
  <svg width="24" height="24" viewBox="0 0 24 24">
    <circle cx="12" cy="12" r="12" fill="#f7941e" />
    <circle cx="13" cy="12" r="11" fill="#2c2255" />
    <path d="M2.500 9h21M2 12h22M2.500 15h21" stroke="#fff" strokeWidth="1.300" />
  </svg>
);
const VsCode = () => (
  <svg width="24" height="24" viewBox="0 0 24 24">
    <path d="M17 0l7 3v18l-7 3L5 12.500z" fill="#1f9cf0" />
    <path d="M17 0L6 10 1.500 7 0 8v8l1.500 1L6 14l11 10V17L10 12l7-5z" fill="#0065a9" />
  </svg>
);
const Notepad = () => (
  <svg width="23" height="24" viewBox="0 0 23 24">
    <path d="M8 2l15 3-3 17-6-1z" fill="#8d8d7a" />
    <path d="M6 1l13 3-5 18-14-3z" fill="#a5dcea" />
    <path d="M6 1l13 3-.5 2L5.300 3z" fill="#8a9aa2" />
  </svg>
);
const ExcelIco = () => (
  <div className="relative w-[24px] h-[20px]">
    <svg width="24" height="20" viewBox="0 0 24 20" className="absolute left-0 top-0">
      <path d="M6 0h18v5H6z" fill="#33c481" /><path d="M6 5h18v5H6z" fill="#21a366" /><path d="M6 10h18v5H6z" fill="#107c41" /><path d="M6 15h18v5H6z" fill="#185c37" />
    </svg>
    <div className="absolute left-[-1px] top-[3px] w-[13px] h-[13px] bg-[#107c41] text-white font-bold text-[10px] leading-[13px] text-center font-['Liberation_Sans',sans-serif]">X</div>
  </div>
);
const Snip = () => (
  <svg width="22" height="24" viewBox="0 0 22 24" fill="none">
    <path d="M6 2c5-3 13 0 14 7 .500 4-2 7-5 8" stroke="#d8401f" strokeWidth="3" />
    <path d="M10 2l1 12 3-3 2-7z" fill="#aaa" />
    <circle cx="5" cy="18" r="2.800" stroke="#1b7fd0" strokeWidth="2" />
    <circle cx="14" cy="21" r="2.500" stroke="#3aa8e8" strokeWidth="2" />
    <path d="M7 16l4-4" stroke="#1b7fd0" strokeWidth="2" />
  </svg>
);

const TaskCell = ({ children, under, active }: { children: React.ReactNode; under?: boolean; active?: boolean }) => (
  <div className={active ? "relative w-[49px] h-[40px] flex items-center justify-center bg-[#ede9e7]" : "relative w-[49px] h-[40px] flex items-center justify-center"}>
    {children}
    {under && <div className={active ? "absolute left-0 right-[1px] bottom-0 h-[2px] bg-[#0078d4]" : "absolute left-[4px] w-[40px] bottom-0 h-[2px] bg-[#0078d4]"} />}
  </div>
);

const Taskbar = () => (
  <div className="h-[40px] bg-[#dcd8d5] flex items-center shrink-0 text-[#222]">
    <div className="w-[49px] flex justify-center">
      <svg width="16" height="16" viewBox="0 0 16 16"><path d="M0 2.200L7 1.200V7.500H0zM8 1L16 0V7.500H8zM0 8.500H7V14.800L0 13.800zM8 8.500H16V16L8 15z" fill="#111" /></svg>
    </div>
    <div className="w-[286px] h-[40px] bg-[#f8f8f8] border-t border-white flex items-center pl-[12px] gap-[10px] text-[14.5px] text-[#333] font-['Open_Sans',sans-serif] shrink-0">
      <svg width="17" height="17" viewBox="0 0 17 17" fill="none" stroke="#222" strokeWidth="1.200"><circle cx="10.500" cy="6.500" r="5.800" /><path d="M6.500 11L1 16.500" /></svg>
      Type here to search
    </div>
    <div className="w-[2px]" />
    <TaskCell>
      <svg width="16" height="16" viewBox="0 0 16 16" fill="none" stroke="#222"><path d="M.5 3.500h10v9H.5zM0 1h11M0 15h11" /><path d="M13 1h3v3h-3zM13 6h3v4h-3z" fill="#222" stroke="none" /></svg>
    </TaskCell>
    <TaskCell><Edge /></TaskCell>
    <TaskCell under><Folder /></TaskCell>
    <TaskCell><Chrome /></TaskCell>
    <TaskCell><Eclipse /></TaskCell>
    <TaskCell under><VsCode /></TaskCell>
    <TaskCell under><Chrome /></TaskCell>
    <TaskCell under><Notepad /></TaskCell>
    <TaskCell under><Chrome badge /></TaskCell>
    <TaskCell under active><ExcelIco /></TaskCell>
    <div className="relative w-[48px] h-[40px] flex items-center justify-center shrink-0">
      <Snip />
      <div className="absolute left-[5px] w-[28px] bottom-0 h-[2px] bg-[#0078d4]" />
      <div className="absolute left-[33px] w-[12px] bottom-0 h-[2px] bg-[#60a8e0]" />
    </div>
    <div className="w-[46px] shrink-0" />
    <div className="relative w-[26px] h-[22px] shrink-0">
      <svg width="26" height="18" viewBox="0 0 26 18" className="absolute left-0 top-[4px]"><path d="M5 18a5 5 0 0 1-1-9.800A7 7 0 0 1 17 4a6 6 0 0 1 4 14z" fill="#a4c9ef" stroke="#5e9de0" /></svg>
      <div className="absolute left-[12px] top-[-4px] w-[12px] h-[12px] rounded-full bg-[#d32f2f] text-white text-[8.500px] leading-[12px] text-center">1</div>
    </div>
    <div className="ml-[7px] w-[50px] text-[14px] font-['Open_Sans',sans-serif]">32°C</div>
    <div className="w-[32px] flex justify-center"><svg width="12" height="7" viewBox="0 0 12 7" fill="none" stroke="#222" strokeWidth="1.200"><path d="M.5 6.500L6 1l5.500 5.500" /></svg></div>
    <div className="w-[32px] flex justify-center"><svg width="12" height="16" viewBox="0 0 12 16" fill="none" stroke="#222"><path d="M1 5.500h6.500v6H1zM7.500 7.500l4-2v6l-4-2zM2 2.500a5 5 0 0 1 6 0M2 14.500a5 5 0 0 0 6 0" /></svg></div>
    <div className="w-[31px] flex justify-center"><svg width="16" height="12" viewBox="0 0 16 12" fill="none" stroke="#222"><path d="M5.500 3.500h10v6h-10z" /><path d="M9 4h6v5H9z" fill="#222" stroke="none" /><path d="M1 4h3v3a1.500 1.500 0 0 1-3 0zM2 1v3M3.500 1v3M2.500 8.500V11h3" /></svg></div>
    <div className="w-[32px] flex justify-center"><svg width="16" height="16" viewBox="0 0 16 16" fill="none" stroke="#222"><circle cx="8" cy="8" r="7.300" /><ellipse cx="8" cy="8" rx="3.300" ry="7.300" /><path d="M1 5.500h14M1 10.500h14" /><circle cx="12.500" cy="12.500" r="3" fill="#dcd8d5" /><path d="M10.500 10.500l4 4" /></svg></div>
    <div className="w-[33px] flex justify-center"><svg width="16" height="14" viewBox="0 0 16 14" fill="none" stroke="#222"><path d="M1 4.500h3L8 1v12L4 9.500H1zM10.500 4.500a3.500 3.500 0 0 1 0 5M12.500 3a6 6 0 0 1 0 8" /><path d="M14.500 1.500a8.500 8.500 0 0 1 0 11" stroke="#999" /></svg></div>
    <div className="w-[64px] text-center text-[12.3px] leading-[19px] font-['Open_Sans',sans-serif] shrink-0">
      <div>3:47 PM</div>
      <div>5/28/2025</div>
    </div>
    <div className="relative w-[41px] h-[40px] flex items-center justify-center">
      <svg width="18" height="17" viewBox="0 0 18 17" className="-translate-x-[1px] -translate-y-[1px]"><path d="M0 0h18v12H10l-4 4v-4H0z" fill="#111" /><path d="M4 3.500h10M4 6h10M4 8.500h7" stroke="#fff" /></svg>
      <div className="absolute left-[21px] top-[21px] w-[16px] h-[16px] rounded-full border border-[#777] bg-[#dcd8d5] text-[#444] text-[12px] leading-[14px] text-center">1</div>
    </div>
  </div>
);

export default function App() {
  return (
    <div className="w-[1280px] h-[800px] overflow-hidden flex flex-col font-['Open_Sans',sans-serif] tracking-[-0.2px]">
      <TitleBar />
      <TabBar />
      <Ribbon />
      <FormulaBar />
      <Sheet />
      <SheetTabs />
      <StatusBar />
      <Taskbar />
    </div>
  );
}
